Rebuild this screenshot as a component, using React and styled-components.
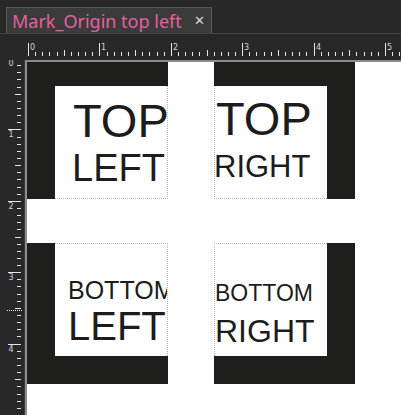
import React from "react";
import styled, { createGlobalStyle } from "styled-components";

const GlobalStyle = createGlobalStyle`
  html, body {
    margin: 0;
    padding: 0;
    background: #282828;
    overflow: hidden;
  }
`;

const UNIT = 71.4;
const TICK = UNIT / 10;

const Frame = styled.div`
  width: 401px;
  height: 415px;
  display: flex;
  flex-direction: column;
  background: #282828;
  font-family: "Liberation Sans", Arial, sans-serif;
  overflow: hidden;
`;

const TabBar = styled.div`
  height: 33px;
  display: flex;
  align-items: flex-end;
  padding-left: 6px;
  border-bottom: 1px solid #444;
  box-sizing: content-box;
`;

const Tab = styled.div`
  height: 26px;
  width: 206px;
  box-sizing: border-box;
  display: flex;
  align-items: center;
  justify-content: space-between;
  padding: 0 6px 0 5px;
  background: #3b3b3b;
  border: 1px solid #575757;
  border-bottom: none;
`;

const TabTitle = styled.span`
  font-family: "Noto Sans", "Open Sans", sans-serif;
  font-size: 18px;
  color: #e6609e;
  white-space: nowrap;
  margin-top: 1px;
`;

const Close = styled.span`
  font-family: "DejaVu Sans", sans-serif;
  font-size: 13px;
  color: #d8d8d8;
  margin-top: -1px;
`;

const RulerRow = styled.div`
  height: 26px;
  display: flex;
`;

const Corner = styled.div`
  width: 25px;
  flex: none;
`;

const Body = styled.div`
  flex: 1;
  display: flex;
  min-height: 0;
`;

const VRulerBox = styled.div`
  width: 25px;
  flex: none;
  position: relative;
`;

const Canvas = styled.div`
  flex: 1;
  background: #fff;
  border-top: 2px solid #8c8c8c;
  border-left: 2px solid #8c8c8c;
  overflow: hidden;
`;

const Board = styled.div`
  display: grid;
  grid-template-columns: 141px 141px;
  grid-template-rows: 141px 141px;
  column-gap: 46px;
  row-gap: 44px;
  margin-top: -4px;
`;

const dark = "#1e1e1c";

const Block = styled.div`
  width: 141px;
  height: 141px;
  box-sizing: border-box;
  display: flex;
  border-style: solid;
  border-color: ${dark};
  border-width: ${({ $corner }) =>
    ({
      tl: "28px 0 0 28px",
      tr: "28px 28px 0 0",
      bl: "0 0 28px 28px",
      br: "0 28px 28px 0",
    }[$corner])};
`;

const Inner = styled.div`
  flex: 1;
  box-sizing: border-box;
  overflow: hidden;
  background: #fff;
  border: 0 dotted #b4b4b4;
  ${({ $corner }) =>
    ({
      tl: "border-right-width: 1px; border-bottom-width: 1px;",
      tr: "border-left-width: 1px; border-bottom-width: 1px;",
      bl: "border-right-width: 1px; border-top-width: 1px;",
      br: "border-left-width: 1px; border-top-width: 1px;",
    }[$corner])}
  padding-top: ${({ $top }) => $top}px;
  padding-left: ${({ $left }) => $left}px;
`;

const Word = styled.div`
  font-size: ${({ $size }) => $size}px;
  line-height: 1;
  color: #1c1c1c;
  white-space: nowrap;
  margin-top: ${({ $gap }) => $gap || 0}px;
  margin-left: ${({ $shift }) => $shift || 0}px;
`;

const RulerSvg = styled.svg`
  display: block;
`;

const tickColor = "#e6e6e6";
const labelColor = "#c9d6e3";

function HRuler() {
  const width = 376;
  const origin = 3;
  const ticks = [];
  for (let i = 0; i * TICK + origin < width; i++) {
    const x = Math.round(origin + i * TICK) + 0.5;
    const major = i % 10 === 0;
    const half = i % 5 === 0;
    const y1 = major ? 9 : half ? 16 : 18;
    ticks.push(<line key={i} x1={x} x2={x} y1={y1} y2={22} stroke={tickColor} />);
    if (major) {
      ticks.push(
        <text key={"t" + i} x={x + 1.5} y={15.5} fontSize="8" fill={labelColor}
          fontFamily="DejaVu Sans, sans-serif">
          {i / 10}
        </text>
      );
    }
  }
  return (
    <RulerSvg width={width} height={26}>
      {ticks}
    </RulerSvg>
  );
}

function VRuler() {
  const height = 355;
  const origin = -2;
  const ticks = [];
  for (let i = 0; i * TICK + origin < height; i++) {
    const y = Math.round(origin + i * TICK) + 0.5;
    const major = i % 10 === 0;
    const half = i % 5 === 0;
    const x1 = major ? 8 : half ? 15 : 17;
    ticks.push(<line key={i} x1={x1} x2={21} y1={y} y2={y} stroke={tickColor} />);
    if (major) {
      ticks.push(
        <text key={"t" + i} x={8.5} y={y + 7.5} fontSize="8" fill={labelColor}
          fontFamily="DejaVu Sans, sans-serif">
          {i / 10}
        </text>
      );
    }
  }
  return (
    <RulerSvg width={25} height={height}>
      {ticks}
      <line x1={7} x2={22} y1={250.5} y2={250.5} stroke={tickColor}
        strokeDasharray="1 1" />
    </RulerSvg>
  );
}

const RulerEdge = styled.div`
  position: absolute;
  right: 0;
  top: 0;
  bottom: 0;
  width: 1px;
  background: #3a3a3a;
`;

export default function App() {
  return (
    <Frame>
      <GlobalStyle />
      <TabBar>
        <Tab>
          <TabTitle>Mark_Origin top left</TabTitle>
          <Close>✕</Close>
        </Tab>
      </TabBar>
      <RulerRow>
        <Corner />
        <HRuler />
      </RulerRow>
      <Body>
        <VRulerBox>
          <VRuler />
          <RulerEdge />
        </VRulerBox>
        <Canvas>
          <Board>
            <Block $corner="tl">
              <Inner $corner="tl" $top={11} $left={18}>
                <Word $size={47}>TOP</Word>
                <Word $size={38} $gap={5} $shift={-1}>LEFT</Word>
              </Inner>
            </Block>
            <Block $corner="tr">
              <Inner $corner="tr" $top={9} $left={1}>
                <Word $size={47}>TOP</Word>
                <Word $size={31} $gap={9} $shift={-2}>RIGHT</Word>
              </Inner>
            </Block>
            <Block $corner="bl">
              <Inner $corner="bl" $top={34} $left={13}>
                <Word $size={25}>BOTTOM</Word>
                <Word $size={40} $gap={3}>LEFT</Word>
              </Inner>
            </Block>
            <Block $corner="br">
              <Inner $corner="br" $top={38} $left={0}>
                <Word $size={23}>BOTTOM</Word>
                <Word $size={32} $gap={10}>RIGHT</Word>
              </Inner>
            </Block>
          </Board>
        </Canvas>
      </Body>
    </Frame>
  );
}
